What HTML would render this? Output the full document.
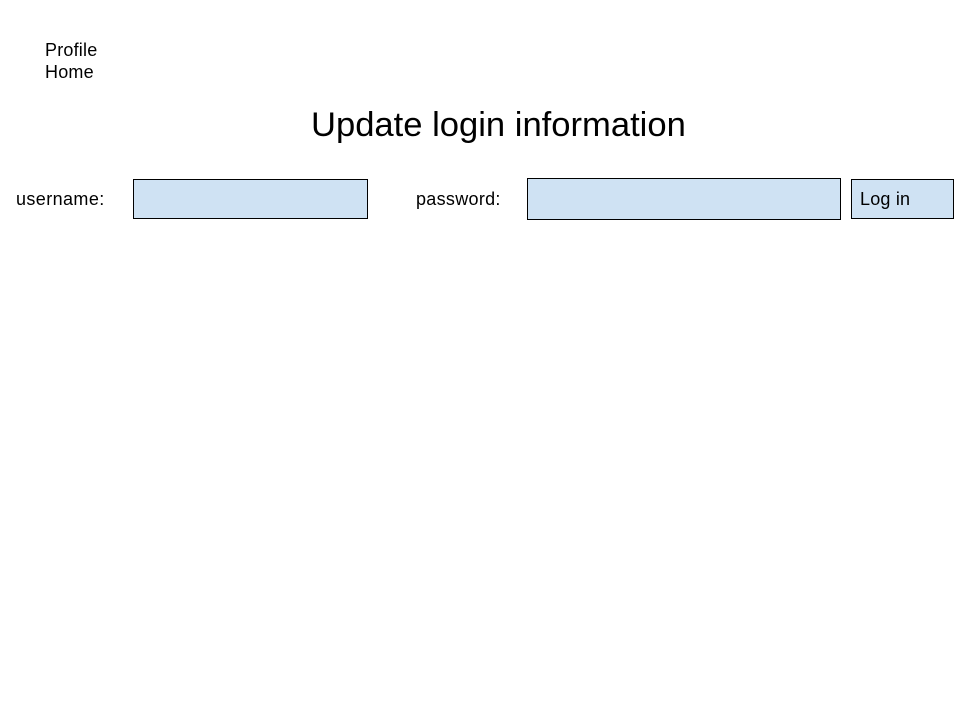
<!DOCTYPE html>
<html><head><style>
body{margin:0;width:960px;height:720px;background:#fff;font-family:"Liberation Sans",sans-serif;color:#000;position:relative;overflow:hidden}
.a{position:absolute;white-space:nowrap}
.box{position:absolute;background:#cfe2f3;border:1px solid #000;box-sizing:border-box}
</style></head><body>
<div class="a" style="left:45px;top:39px;font-size:18px;line-height:22px;letter-spacing:0.2px">Profile<br>Home</div>
<div class="a" style="left:311px;top:104px;font-size:34.6px;line-height:42px">Update login information</div>
<div class="a" style="left:16px;top:189px;font-size:18px;line-height:20px;letter-spacing:0.4px">username:</div>
<div class="box" style="left:133px;top:179px;width:235px;height:40px"></div>
<div class="a" style="left:416px;top:189px;font-size:18px;line-height:20px;letter-spacing:0.3px">password:</div>
<div class="box" style="left:527px;top:178px;width:314px;height:42px"></div>
<div class="box" style="left:851px;top:179px;width:103px;height:40px"></div>
<div class="a" style="left:860px;top:189px;font-size:18px;line-height:20px;letter-spacing:0.2px">Log in</div>
</body></html>
